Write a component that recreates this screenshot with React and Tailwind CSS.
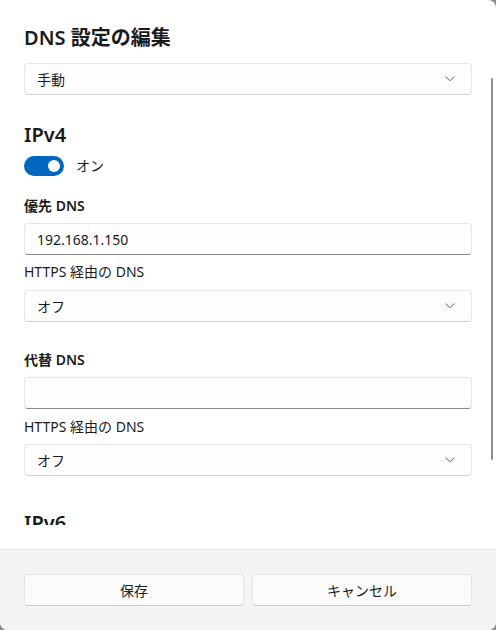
import { useState } from 'react';

function Chevron() {
  return (
    <svg width="10" height="6" viewBox="0 0 10 6" className="text-[#5d5d5d]">
      <path d="M1 0.8 L5 4.8 L9 0.8" fill="none" stroke="currentColor" strokeWidth="1" strokeLinecap="round" strokeLinejoin="round" />
    </svg>
  );
}

function Select({ value, className = '' }) {
  return (
    <div
      className={`h-8 rounded-[4px] border border-[#e6e6e6] border-b-[#d4d4d4] bg-[#fdfdfd] flex items-center justify-between pl-3 pr-4 ${className}`}
    >
      <span className="text-[14px] text-[#1b1b1b]">{value}</span>
      <Chevron />
    </div>
  );
}

function TextInput({ value, className = '' }) {
  return (
    <div
      className={`h-8 rounded-[4px] border border-[#e6e6e6] border-b-[#8a8a8a] bg-[#fdfdfd] flex items-center px-3 ${className}`}
    >
      <span className="text-[14px] text-[#1b1b1b]">{value}</span>
    </div>
  );
}

export default function App() {
  const [ipv4On] = useState(true);

  return (
    <div className="w-[496px] h-[630px] bg-[#8c8c8c] font-['Noto_Sans','Noto_Sans_CJK_JP',sans-serif] text-[#1b1b1b]">
      <div className="relative h-full bg-white rounded-tr-[8px] rounded-b-[8px] overflow-hidden flex flex-col">
        {/* scrollable body */}
        <div className="h-[525px] overflow-hidden px-6 pt-6 shrink-0">
          <h1 className="text-[20px] leading-[28px] font-semibold">DNS 設定の編集</h1>
          <Select value="手動" className="mt-[11px]" />

          <h2 className="mt-[26px] text-[20px] leading-[28px] font-semibold">IPv4</h2>
          <div className="mt-[7px] flex items-center gap-3 h-5">
            <div className="relative w-10 h-5 rounded-full bg-[#0067c0]">
              <div className={`absolute top-1 w-3 h-3 rounded-full bg-white ${ipv4On ? 'right-1' : 'left-1'}`}></div>
            </div>
            <span className="text-[14px] leading-5">オン</span>
          </div>

          <div className="mt-5 text-[14px] leading-5 font-semibold">優先 DNS</div>
          <TextInput value="192.168.1.150" className="mt-[7px]" />
          <div className="mt-[7px] text-[14px] leading-5">HTTPS 経由の DNS</div>
          <Select value="オフ" className="mt-2" />

          <div className="mt-[28px] text-[14px] leading-5 font-semibold">代替 DNS</div>
          <TextInput value="" className="mt-[7px]" />
          <div className="mt-2 text-[14px] leading-5">HTTPS 経由の DNS</div>
          <Select value="オフ" className="mt-[7px]" />

          <h2 className="mt-[33px] text-[20px] leading-[28px] font-semibold">IPv6</h2>
        </div>
        <div className="h-6 shrink-0"></div>

        {/* footer */}
        <div className="flex-1 border-t border-[#e5e5e5] bg-[#f3f3f3] px-6 pt-6">
          <div className="grid grid-cols-2 gap-2">
            <button className="h-8 rounded-[4px] border border-[#e5e5e5] border-b-[#cccccc] bg-[#fbfbfb] text-[14px]">
              保存
            </button>
            <button className="h-8 rounded-[4px] border border-[#e5e5e5] border-b-[#cccccc] bg-[#fbfbfb] text-[14px]">
              キャンセル
            </button>
          </div>
        </div>

        {/* scrollbar thumb */}
        <div className="absolute right-[3px] top-[78px] w-[2px] h-[382px] rounded-full bg-[#8a8a8a]"></div>
      </div>
    </div>
  );
}
